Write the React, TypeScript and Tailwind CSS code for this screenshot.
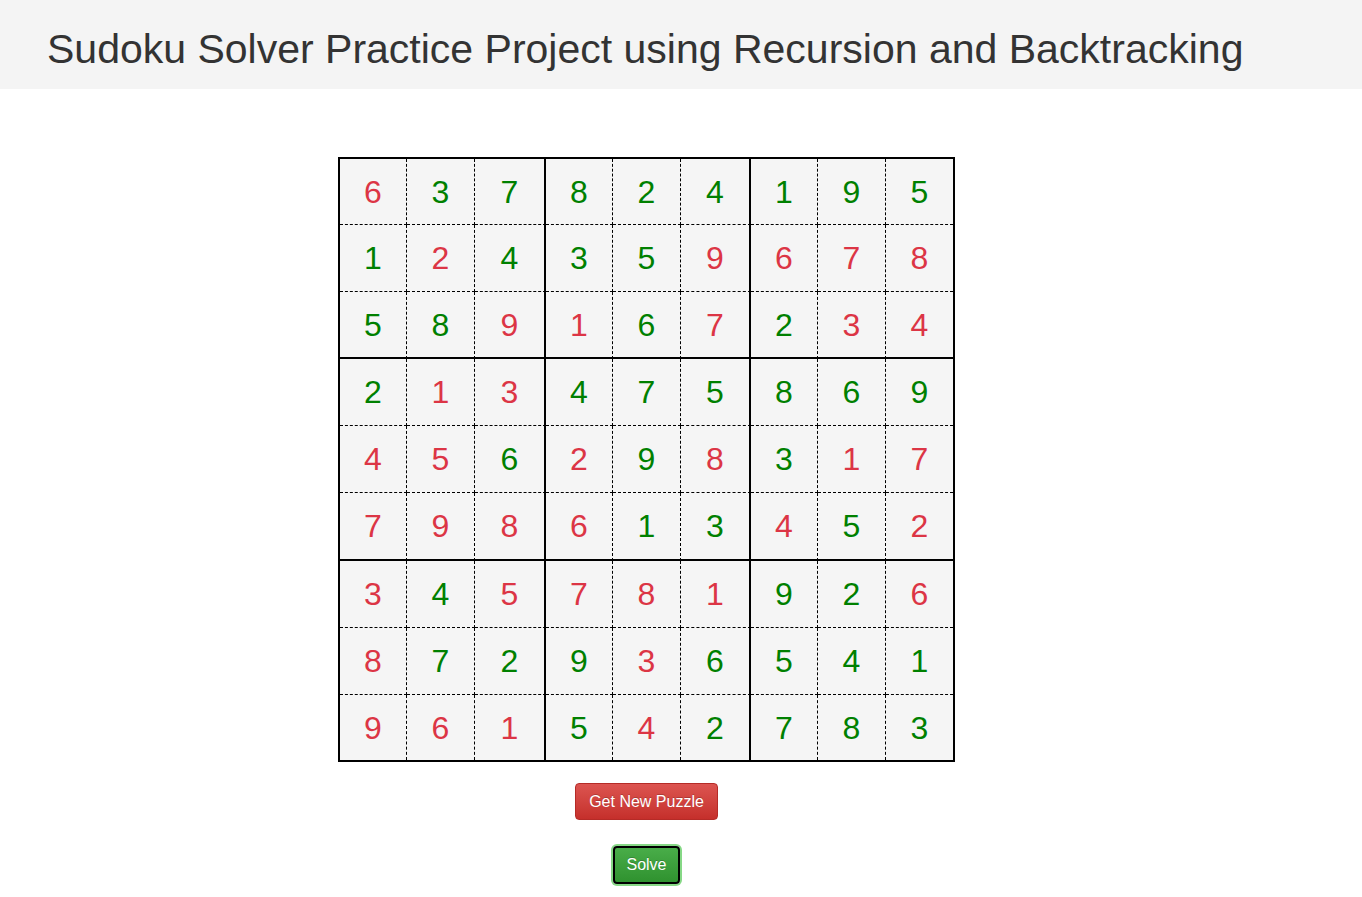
import React from "react";

const board = [
  [6, 3, 7, 8, 2, 4, 1, 9, 5],
  [1, 2, 4, 3, 5, 9, 6, 7, 8],
  [5, 8, 9, 1, 6, 7, 2, 3, 4],
  [2, 1, 3, 4, 7, 5, 8, 6, 9],
  [4, 5, 6, 2, 9, 8, 3, 1, 7],
  [7, 9, 8, 6, 1, 3, 4, 5, 2],
  [3, 4, 5, 7, 8, 1, 9, 2, 6],
  [8, 7, 2, 9, 3, 6, 5, 4, 1],
  [9, 6, 1, 5, 4, 2, 7, 8, 3],
];

// 1 = green (given), 0 = red (filled in)
const given = [
  "011111111",
  "101110000",
  "110010100",
  "100111111",
  "001010100",
  "000011010",
  "010000110",
  "011101111",
  "000101111",
];

function Cell({ r, c }: { r: number; c: number }) {
  const isGiven = given[r][c] === "1";
  const right =
    c === 8 ? "" : c % 3 === 2 ? "border-r-2 border-r-black border-solid" : "border-r border-r-black border-dashed";
  const bottom =
    r === 8
      ? ""
      : r % 3 === 2
      ? "border-b-2 border-b-black [border-bottom-style:solid]"
      : "border-b border-b-black [border-bottom-style:dashed]";
  return (
    <div
      className={`${right} ${bottom} bg-[#f5f5f5] flex items-center justify-center text-[32px] ${
        isGiven ? "text-[#008000]" : "text-[#dc3545]"
      }`}
    >
      {board[r][c]}
    </div>
  );
}

export default function App() {
  return (
    <div className="min-h-screen bg-white font-[family-name:'Liberation_Sans',Arial,sans-serif]">
      <header className="h-[89px] bg-[#f4f4f4] flex items-center pl-[47px] pt-[9px]">
        <h1 className="text-[41px] text-[#333] leading-none">Sudoku Solver Practice Project using Recursion and Backtracking</h1>
      </header>
      <main className="w-[1293px] flex flex-col items-center pt-[68px]">
        <div className="border-2 border-black grid grid-cols-[67px_68px_71px_67px_68px_70px_67px_68px_67px] grid-rows-[66px_67px_67px_67px_67px_68px_67px_67px_65px]">
          {board.map((row, r) => row.map((_, c) => <Cell key={`${r}-${c}`} r={r} c={c} />))}
        </div>
        <button className="mt-[21px] h-[37px] px-[13px] rounded-[4px] border border-[#b52b27] bg-gradient-to-b from-[#dc5450] to-[#c52f2b] text-white text-[16px] [text-shadow:0_-1px_0_rgba(0,0,0,0.2)]">
          Get New Puzzle
        </button>
        <button className="mt-[26px] h-[38px] px-[11px] rounded-[4px] border-2 border-black bg-gradient-to-b from-[#49ad49] to-[#2f922f] text-white text-[16px] shadow-[0_0_0_2px_#86d886] [text-shadow:0_-1px_0_rgba(0,0,0,0.2)]">
          Solve
        </button>
      </main>
    </div>
  );
}
